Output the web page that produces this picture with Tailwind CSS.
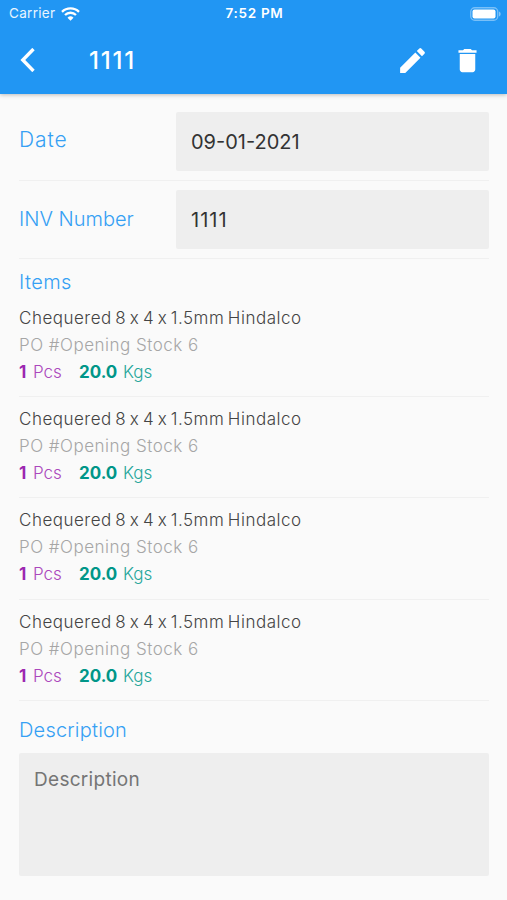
<!DOCTYPE html>
<html lang="en">

<head>
    <meta charset="UTF-8" />
    <meta name="viewport" content="width=device-width, initial-scale=1.0" />
    <title>Invoice 1111</title>
    <script src="https://cdn.jsdelivr.net/npm/@tailwindcss/browser@4"></script>
</head>

<body class="bg-[#fafafa] h-[900px] overflow-hidden font-['Inter',sans-serif] font-light">

    <!-- Header -->
    <header class="relative h-[94px] bg-[#2196f3] text-white shadow-[0_1px_4px_rgba(0,0,0,0.25)]">
        <div class="grid grid-cols-3 items-center h-[27px] pl-[9px] pr-[6px] text-[13.5px]">
            <div class="flex items-center gap-[6px] font-normal text-white/90">
                <span class="tracking-[0.3px]">Carrier</span>
                <svg class="w-[19px] h-[14px]" viewBox="0 0 19 14" fill="none" stroke="white" stroke-width="2.3">
                    <path d="M1 4.9a12.2 12.2 0 0 1 17 0" />
                    <path d="M4 8a7.9 7.9 0 0 1 11 0" />
                    <path d="M9.5 13.8L6.5 10.8a4.3 4.3 0 0 1 6 0z" fill="white" stroke="none" />
                </svg>
            </div>
            <span class="pr-px text-center font-semibold tracking-[0.7px]">7:52 PM</span>
            <svg class="justify-self-end w-[31px] h-[14px]" viewBox="0 0 31 14">
                <rect x="0.75" y="0.75" width="27" height="12.5" rx="4" fill="none" stroke="white" stroke-opacity="0.4" stroke-width="1.3" />
                <rect x="2.5" y="2.5" width="23" height="9" rx="2" fill="white" />
                <path d="M29 4.5v5c2.2-1 2.2-4 0-5z" fill="white" fill-opacity="0.45" />
            </svg>
        </div>
        <div class="flex items-center h-[66px] pl-[20px] pr-[24px]">
            <svg class="w-4 h-6" viewBox="0 0 16 24" fill="none" stroke="white" stroke-width="3.4">
                <path d="M13.5 1L2.8 12l10.7 11" />
            </svg>
            <h1 class="ml-[53px] pt-[2px] text-[24px] font-medium tracking-[1.8px]">1111</h1>
            <svg class="ml-auto w-[33px] h-[33px]" viewBox="0 0 24 24" fill="white">
                <path d="M3 17.25V21h3.75L17.81 9.94l-3.75-3.75L3 17.25zM20.71 7.04a.996.996 0 0 0 0-1.41l-2.34-2.34a.996.996 0 0 0-1.41 0l-1.83 1.83 3.75 3.75 1.83-1.83z" />
            </svg>
            <svg class="ml-[23px] w-[31px] h-[31px]" viewBox="0 0 24 24" fill="white">
                <path d="M6 19c0 1.1.9 2 2 2h8c1.1 0 2-.9 2-2V7H6v12zM19 4h-3.5l-1-1h-5l-1 1H5v2h14V4z" />
            </svg>
        </div>
    </header>

    <main class="pl-[19px] pr-[18px] pt-[8px]">
        <!-- Fields -->
        <div class="flex items-center h-[79px] border-b border-[#f0f0f0]">
            <label class="w-[157px] pb-[2px] text-[21px] tracking-[0.9px] text-[#35a0f4]">Date</label>
            <div class="flex items-center w-[313px] h-[59px] pl-[15px] pt-px rounded-[2px] bg-[#eee] text-[#333] text-[20px] font-normal">09-01-2021</div>
        </div>
        <div class="flex items-center h-[78px] border-b border-[#f0f0f0]">
            <label class="w-[157px] pb-[2px] text-[20px] text-[#35a0f4]">INV Number</label>
            <div class="flex items-center w-[313px] h-[59px] pl-[15px] rounded-[2px] bg-[#eee] text-[#333] text-[20px] font-normal tracking-[1px]">1111</div>
        </div>

        <!-- Items -->
        <h2 class="h-[46px] pt-[9px] text-[20px] leading-[28px] tracking-[0.4px] text-[#35a0f4]">Items</h2>
        <ul class="text-[17px] leading-[27px] [font-feature-settings:'calt'_0]">
            <li class="h-[92px] border-b border-[#f0f0f0]">
                <p class="text-[#444] tracking-[0.5px] [word-spacing:-1.7px]">Chequered 8 x 4 x 1.5mm Hindalco</p>
                <p class="text-[#a6a6a6] tracking-[0.5px]">PO #Opening Stock 6</p>
                <p class="flex"><b class="w-[14px] font-bold text-[#9c27b0]">1</b><span class="w-[46px] text-[#ab47bc]">Pcs</span><b class="w-[44px] font-bold text-[#009688]">20.0</b><span class="text-[#26a69a]">Kgs</span></p>
            </li>
            <li class="h-[101.33px] pt-[9px] border-b border-[#f0f0f0]">
                <p class="text-[#444] tracking-[0.5px] [word-spacing:-1.7px]">Chequered 8 x 4 x 1.5mm Hindalco</p>
                <p class="text-[#a6a6a6] tracking-[0.5px]">PO #Opening Stock 6</p>
                <p class="flex"><b class="w-[14px] font-bold text-[#9c27b0]">1</b><span class="w-[46px] text-[#ab47bc]">Pcs</span><b class="w-[44px] font-bold text-[#009688]">20.0</b><span class="text-[#26a69a]">Kgs</span></p>
            </li>
            <li class="h-[101.33px] pt-[9px] border-b border-[#f0f0f0]">
                <p class="text-[#444] tracking-[0.5px] [word-spacing:-1.7px]">Chequered 8 x 4 x 1.5mm Hindalco</p>
                <p class="text-[#a6a6a6] tracking-[0.5px]">PO #Opening Stock 6</p>
                <p class="flex"><b class="w-[14px] font-bold text-[#9c27b0]">1</b><span class="w-[46px] text-[#ab47bc]">Pcs</span><b class="w-[44px] font-bold text-[#009688]">20.0</b><span class="text-[#26a69a]">Kgs</span></p>
            </li>
            <li class="h-[101.33px] pt-[9px] border-b border-[#f0f0f0]">
                <p class="text-[#444] tracking-[0.5px] [word-spacing:-1.7px]">Chequered 8 x 4 x 1.5mm Hindalco</p>
                <p class="text-[#a6a6a6] tracking-[0.5px]">PO #Opening Stock 6</p>
                <p class="flex"><b class="w-[14px] font-bold text-[#9c27b0]">1</b><span class="w-[46px] text-[#ab47bc]">Pcs</span><b class="w-[44px] font-bold text-[#009688]">20.0</b><span class="text-[#26a69a]">Kgs</span></p>
            </li>
        </ul>

        <!-- Description -->
        <h2 class="h-[52px] pt-[15px] text-[20px] leading-[28px] tracking-[0.2px] text-[#35a0f4]">Description</h2>
        <div class="w-[470px] h-[123px] pl-[15px] pt-[13px] rounded-[2px] bg-[#eee] text-[#757575] text-[19px] leading-[28px] font-normal tracking-[0.3px]">Description</div>
    </main>
</body>

</html>
